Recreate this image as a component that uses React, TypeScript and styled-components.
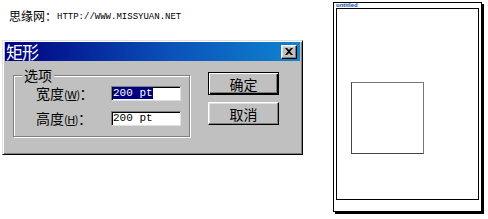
import styled, { createGlobalStyle } from 'styled-components'

const GlobalStyle = createGlobalStyle`
  body {
    margin: 0;
    background: #fff;
    font-family: "Noto Sans CJK SC", "Liberation Sans", sans-serif;
  }
`

const Page = styled.div`
  display: flex;
  align-items: flex-start;
  width: 488px;
  height: 219px;
  overflow: hidden;
`

const LeftColumn = styled.div`
  width: 331px;
  padding-left: 2px;
  flex-shrink: 0;
`

// Header

const Header = styled.div`
  display: flex;
  align-items: center;
  height: 16px;
  margin-top: 8px;
  padding-left: 7px;
`

const SiteName = styled.span`
  font-size: 12px;
  line-height: 16px;
  color: #000;
`

const SiteUrl = styled.span`
  font-family: "Liberation Mono", monospace;
  font-size: 9px;
  text-transform: uppercase;
  color: #000;
  margin-top: 1px;
`

// Dialog

const Dialog = styled.div`
  box-sizing: border-box;
  width: 301px;
  height: 115px;
  margin-top: 16px;
  padding: 1px 2px 2px 2px;
  background: #c0c0c0;
  border: 1px solid;
  border-color: #dfdfdf #000 #000 #dfdfdf;
  box-shadow: inset 1px 1px #fff, inset -1px -1px #808080;
`

const TitleBar = styled.div`
  display: flex;
  align-items: center;
  justify-content: space-between;
  height: 19px;
  padding: 0 3px 0 1px;
  background: linear-gradient(to right, #000080, #0a50b8 55%, #1084d0);
`

const Title = styled.span`
  color: #fff;
  font-size: 17px;
  line-height: 19px;
  letter-spacing: -1px;
`

const CloseButton = styled.div`
  box-sizing: border-box;
  width: 16px;
  height: 14px;
  display: flex;
  align-items: center;
  justify-content: center;
  background: #c0c0c0;
  border: 1px solid;
  border-color: #fff #000 #000 #fff;
  box-shadow: inset -1px -1px #808080, inset 1px 1px #dfdfdf;
`

const DialogBody = styled.div`
  display: flex;
  align-items: flex-start;
  padding: 11px 0 0 8px;
`

const GroupBox = styled.div`
  position: relative;
  box-sizing: border-box;
  width: 177px;
  height: 62px;
  margin-top: 3px;
  padding: 10px 0 0 22px;
  border: 1px solid #808080;
  box-shadow: inset 1px 1px #fff, 1px 1px #fff;
  display: flex;
  flex-direction: column;
  gap: 10px;
`

const Legend = styled.span`
  position: absolute;
  top: -10px;
  left: 8px;
  padding: 0 2px;
  background: #c0c0c0;
  font-size: 14px;
  line-height: 18px;
  color: #000;
`

const FieldRow = styled.div`
  display: flex;
  align-items: center;
  height: 15px;
`

const Label = styled.span`
  width: 75px;
  font-size: 14px;
  line-height: 15px;
  color: #000;
  white-space: nowrap;
`

const Mnemonic = styled.span`
  font-size: 11px;
  letter-spacing: -0.5px;
`

const Field = styled.div`
  box-sizing: border-box;
  width: 70px;
  height: 15px;
  padding-left: 1px;
  background: #fff;
  border: 1px solid;
  border-color: #808080 #dfdfdf #dfdfdf #808080;
  box-shadow: inset 1px 1px #000;
  font-family: "Liberation Mono", monospace;
  font-size: 11px;
  line-height: 13px;
  color: #000;
  white-space: pre;
  overflow: hidden;
`

const FieldText = styled.span<{ $selected?: boolean }>`
  background: ${({ $selected }) => ($selected ? '#000080' : 'transparent')};
  color: ${({ $selected }) => ($selected ? '#fff' : '#000')};
`

const ButtonColumn = styled.div`
  display: flex;
  flex-direction: column;
  gap: 7px;
  margin-left: 18px;
`

const Button = styled.div<{ $default?: boolean }>`
  box-sizing: border-box;
  width: 71px;
  height: 23px;
  display: flex;
  align-items: center;
  justify-content: center;
  background: #c0c0c0;
  font-size: 14px;
  color: #000;
  border: 1px solid;
  border-color: ${({ $default }) => ($default ? '#000' : '#fff #000 #000 #fff')};
  box-shadow: ${({ $default }) =>
    $default
      ? 'inset 1px 1px #fff, inset -1px -1px #000, inset -2px -2px #808080'
      : 'inset -1px -1px #808080, inset 1px 1px #dfdfdf'};
`

// Page preview

const Preview = styled.div`
  box-sizing: border-box;
  width: 149px;
  height: 210px;
  margin-top: 2px;
  padding: 0 2px;
  border: 1px solid #000;
  box-shadow: 2px 2px 0 #000;
  flex-shrink: 0;
`

const PreviewLabel = styled.div`
  height: 5px;
  font-family: "Liberation Sans", sans-serif;
  font-size: 6px;
  line-height: 5px;
  font-weight: bold;
  color: #1050a0;
  overflow: hidden;
`

const PageArea = styled.div`
  box-sizing: border-box;
  width: 143px;
  height: 192px;
  border: 1px solid #000;
  padding: 73px 0 0 14px;
`

const Square = styled.div`
  box-sizing: border-box;
  width: 73px;
  height: 72px;
  border: 1px solid;
  border-color: #777 #777 #444 #444;
`

const CloseIcon = () => (
  <svg width="8" height="7" viewBox="0 0 8 7">
    <path d="M0 0h2l2 2 2-2h2L5 3.5 8 7H6L4 5 2 7H0l3-3.5z" fill="#000" />
  </svg>
)

export default function App() {
  return (
    <>
      <GlobalStyle />
      <Page>
        <LeftColumn>
          <Header>
            <SiteName>思缘网：</SiteName>
            <SiteUrl>http://www.missyuan.net</SiteUrl>
          </Header>
          <Dialog>
            <TitleBar>
              <Title>矩形</Title>
              <CloseButton>
                <CloseIcon />
              </CloseButton>
            </TitleBar>
            <DialogBody>
              <GroupBox>
                <Legend>选项</Legend>
                <FieldRow>
                  <Label>
                    宽度<Mnemonic>(<u>W</u>)</Mnemonic>：
                  </Label>
                  <Field>
                    <FieldText $selected>200 pt</FieldText>
                  </Field>
                </FieldRow>
                <FieldRow>
                  <Label>
                    高度<Mnemonic>(<u>H</u>)</Mnemonic>：
                  </Label>
                  <Field>
                    <FieldText>200 pt</FieldText>
                  </Field>
                </FieldRow>
              </GroupBox>
              <ButtonColumn>
                <Button $default>确定</Button>
                <Button>取消</Button>
              </ButtonColumn>
            </DialogBody>
          </Dialog>
        </LeftColumn>
        <Preview>
          <PreviewLabel>untitled</PreviewLabel>
          <PageArea>
            <Square />
          </PageArea>
        </Preview>
      </Page>
    </>
  )
}
